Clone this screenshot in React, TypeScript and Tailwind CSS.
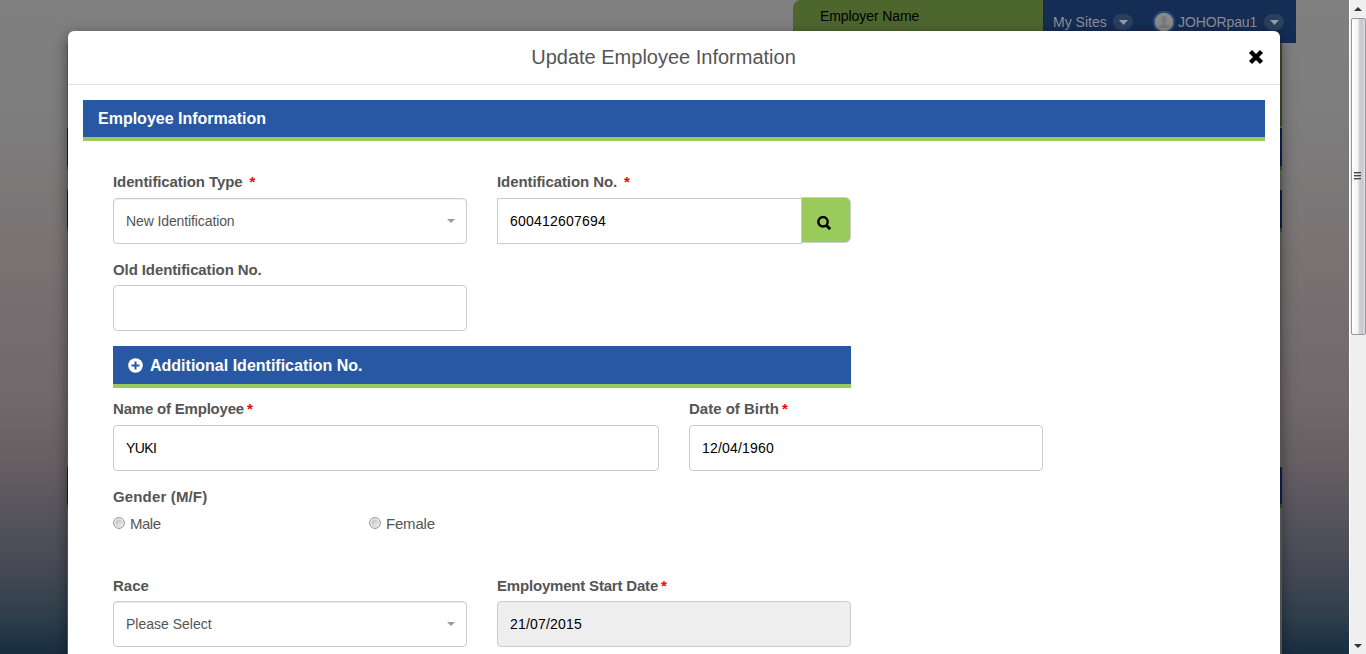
import React from "react";

type FieldProps = {
  label: string;
  labelClass?: string;
  required?: "near" | "far";
  className?: string;
  children: React.ReactNode;
};

function Field({ label, labelClass = "", required, className = "w-[354px]", children }: FieldProps) {
  return (
    <div className={`flex flex-col ${className}`}>
      <div className="flex h-5 text-[15px] leading-5 font-bold text-[#555] whitespace-nowrap">
        <span className={labelClass}>{label}</span>
        {required && (
          <span className={required === "far" ? "ml-[7px] text-[#f00]" : "ml-[3px] text-[#f00]"}>*</span>
        )}
      </div>
      {children}
    </div>
  );
}

function Select({ text, className }: { text: string; className: string }) {
  return (
    <div className={`flex h-[46px] items-center justify-between rounded-[4px] border border-[#ccc] bg-white pl-3 pr-[11px] text-sm text-[#555] shadow-[inset_0_1px_1px_rgba(0,0,0,0.075)] ${className}`}>
      <span className="whitespace-nowrap">{text}</span>
      <svg width="8" height="4" viewBox="0 0 8 4"><path d="M0 0h8L4 4z" fill="#999" /></svg>
    </div>
  );
}

function TextBox({ text, className }: { text: string; className: string }) {
  return (
    <div className={`flex h-[46px] items-center rounded-[4px] border border-[#ccc] pl-3 text-sm text-black ${className}`}>
      {text}
    </div>
  );
}

function Radio({ label, className }: { label: string; className: string }) {
  return (
    <div className={`flex items-center text-[15px] leading-5 text-[#555] ${className}`}>
      <svg width="12" height="12" viewBox="0 0 12 12" className="mr-[5px] mb-[2px]">
        <defs>
          <linearGradient id={`radio-${label}`} x1="0" y1="0" x2="1" y2="1">
            <stop offset="0" stopColor="#b5b9bd" />
            <stop offset="1" stopColor="#f8f8f8" />
          </linearGradient>
        </defs>
        <circle cx="6" cy="6" r="5.4" fill="#f4f4f4" stroke="#8e8f8f" />
        <circle cx="6" cy="6" r="3.5" fill={`url(#radio-${label})`} stroke="#c5c9cd" strokeWidth="0.6" />
      </svg>
      {label}
    </div>
  );
}

function Dropdown() {
  return (
    <span className="flex h-4 w-5 items-center justify-center rounded-full bg-[#29405f]">
      <svg width="9" height="5" viewBox="0 0 9 5"><path d="M0 0h9L4.5 5z" fill="#9a9ca0" /></svg>
    </span>
  );
}

function PageBar({ className }: { className: string }) {
  return <div className={`shrink-0 border-b-4 border-[#3c5a24] bg-[#0d2450] ${className}`} />;
}

function Backdrop() {
  return (
    <div className="flex h-[654px] flex-col bg-[linear-gradient(to_bottom,#808080_0px,#7d7d7d_120px,#7a7475_230px,#70686b_400px,#676063_460px,#58555d_510px,#454955_570px,#2f3f4b_615px,#1a2e42_652px)]">
      <div className="flex h-[43px] shrink-0 pl-[793px]">
        <div className="w-[250px] rounded-tl-[8px] bg-[#4d662e] pl-[27px] pt-[6px] text-sm leading-5 tracking-[-0.08px] text-black">
          Employer Name
        </div>
        <div className="flex h-[43px] w-[253px] items-start bg-[#152c54] pt-[14px] pl-[10px] text-sm leading-4 text-[#8c8f94]">
          <span className="w-[62px] whitespace-nowrap">My Sites</span>
          <span className="-ml-[2px]"><Dropdown /></span>
          <svg className="-mt-[4px] ml-[19px]" width="24" height="24" viewBox="0 0 24 24">
            <circle cx="12" cy="12" r="10.3" fill="#8a8a8a" stroke="#234a78" strokeWidth="2" />
            <path d="M12 6c-2.3 0-3 1.7-2.8 3.6 0 1 .5 2.3 1.2 3l-.2 1.6-3.7 1.8v2h11v-2l-3.7-1.8-.2-1.6c.7-.7 1.2-2 1.2-3C15 7.7 14.300 6 12 6z" fill="#7b7b7b" />
          </svg>
          <span className="ml-[2px] w-[86px] whitespace-nowrap tracking-[-0.1px]">JOHORpau1</span>
          <Dropdown />
        </div>
      </div>
      <div className="ml-[67px] flex w-[1215px] grow flex-col bg-[#696b69]">
        <div className="h-[83px] shrink-0 self-end w-[100px] bg-[#3c5424]" />
        <PageBar className="mt-[2px] h-[42px]" />
        <PageBar className="mt-5 h-[42px]" />
        <PageBar className="mt-[235px] h-[41px]" />
      </div>
    </div>
  );
}

function Scrollbar() {
  return (
    <div className="flex w-[17px] flex-col items-center border-l border-white bg-[#efefef]">
      <div className="flex h-[18px] items-center justify-center">
        <svg width="8" height="4" viewBox="0 0 8 4"><path d="M4 0l4 4H0z" fill="#333" /></svg>
      </div>
      <div className="flex h-[317px] w-[15px] flex-col items-center justify-center gap-px rounded-[2px] border border-[#969696] bg-[linear-gradient(to_right,#fff_0%,#f3f3f3_45%,#d2d2d6_55%,#c8c8cc_80%,#e2e2e2_100%)]">
        <span className="mr-px h-[2px] w-[7px] border-t border-[#444] bg-[#aaa]" />
        <span className="mr-px h-[2px] w-[7px] border-t border-[#444] bg-[#aaa]" />
        <span className="mr-px mb-[2px] h-[2px] w-[7px] border-t border-[#444] bg-[#aaa]" />
      </div>
      <div className="grow" />
      <div className="flex h-4 items-center justify-center">
        <svg width="8" height="4" viewBox="0 0 8 4"><path d="M0 0h8L4 4z" fill="#333" /></svg>
      </div>
    </div>
  );
}

function Modal() {
  return (
    <div className="absolute top-[31px] left-[68px] flex h-[640px] w-[1212px] flex-col rounded-[6px] bg-white shadow-[0_5px_15px_rgba(0,0,0,0.5)]">
      <div className="flex h-[54px] shrink-0 items-center border-b border-[#e5e5e5] pr-4">
        <h1 className="grow pb-[2px] pl-[11px] text-center text-[20px] leading-6 text-[#555]">Update Employee Information</h1>
        <svg width="16" height="16" viewBox="0 0 16 16" className="-mt-[2px]">
          <path d="M2.500 2.500l11 11M13.500 2.500l-11 11" stroke="#000" strokeWidth="4.300" />
        </svg>
      </div>
      <div className="mx-[15px] mt-[15px] h-[41px] shrink-0 border-b-4 border-[#99cb5c] bg-[#2857a4] pl-[15px] text-base leading-[37px] font-bold text-white">
        Employee Information
      </div>
      <div className="ml-[45px] mt-[31px] flex flex-col">
        <div className="flex gap-[30px]">
          <Field label="Identification Type" labelClass="tracking-[-0.1px]" required="far">
            <Select text="New Identification" className="mt-[6px] tracking-[-0.11px]" />
          </Field>
          <Field label="Identification No." labelClass="tracking-[-0.09px]" required="far">
            <div className="mt-[5px] flex">
              <div className="mt-px flex h-[46px] w-[305px] items-center border border-[#ccc] pl-3 text-sm tracking-[0.21px] text-black">600412607694</div>
              <div className="-ml-px flex h-[46px] w-[50px] items-center justify-center rounded-r-[6px] border border-[#ccc] bg-[#99cb5c]">
                <svg width="14" height="14" viewBox="0 0 14 14" className="mt-[6px] -ml-[4px]">
                  <circle cx="6" cy="5.800" r="4.700" fill="none" stroke="#000" strokeWidth="2.400" />
                  <path d="M9 9l4.200 4.200" stroke="#000" strokeWidth="2.800" />
                </svg>
              </div>
            </div>
          </Field>
        </div>
        <Field label="Old Identification No." labelClass="tracking-[-0.1px]" className="mt-4 w-[354px]">
          <TextBox text="" className="mt-[5px]" />
        </Field>
        <div className="mt-[15px] flex h-[42px] w-[738px] items-center border-b-4 border-[#99cb5c] bg-[#2857a4] pl-[15px] text-base font-bold text-white">
          <svg width="15" height="15" viewBox="0 0 15 15" className="mr-[7px]">
            <circle cx="7.500" cy="7.500" r="7.300" fill="#fff" />
            <path d="M7.500 3.500v8M3.500 7.500h8" stroke="#2857a4" strokeWidth="2" />
          </svg>
          <span className="pt-[2px]">Additional Identification No.</span>
        </div>
        <div className="mt-[11px] flex gap-[30px]">
          <Field label="Name of Employee" labelClass="tracking-[-0.2px]" required="near" className="w-[546px]">
            <TextBox text="YUKI" className="mt-[6px] tracking-[-0.6px]" />
          </Field>
          <Field label="Date of Birth" required="near">
            <TextBox text="12/04/1960" className="mt-[6px] tracking-[0.18px]" />
          </Field>
        </div>
        <Field label="Gender (M/F)" labelClass="tracking-[0.15px]" className="mt-4">
          <div className="mt-[7px] flex">
            <Radio label="Male" className="w-64 tracking-[-0.5px]" />
            <Radio label="Female" className="w-40 tracking-[-0.2px]" />
          </div>
        </Field>
        <div className="mt-[42px] flex gap-[30px]">
          <Field label="Race">
            <Select text="Please Select" className="mt-[5px]" />
          </Field>
          <Field label="Employment Start Date" labelClass="tracking-[-0.19px]" required="near">
            <TextBox text="21/07/2015" className="mt-[5px] bg-[#eee] tracking-[0.18px]" />
          </Field>
        </div>
      </div>
    </div>
  );
}

export default function App() {
  return (
    <div className="flex h-[654px] w-[1366px] overflow-hidden font-['Liberation_Sans',Arial,sans-serif]">
      <div className="relative h-[654px] w-[1349px] overflow-hidden">
        <Backdrop />
        <Modal />
      </div>
      <Scrollbar />
    </div>
  );
}
